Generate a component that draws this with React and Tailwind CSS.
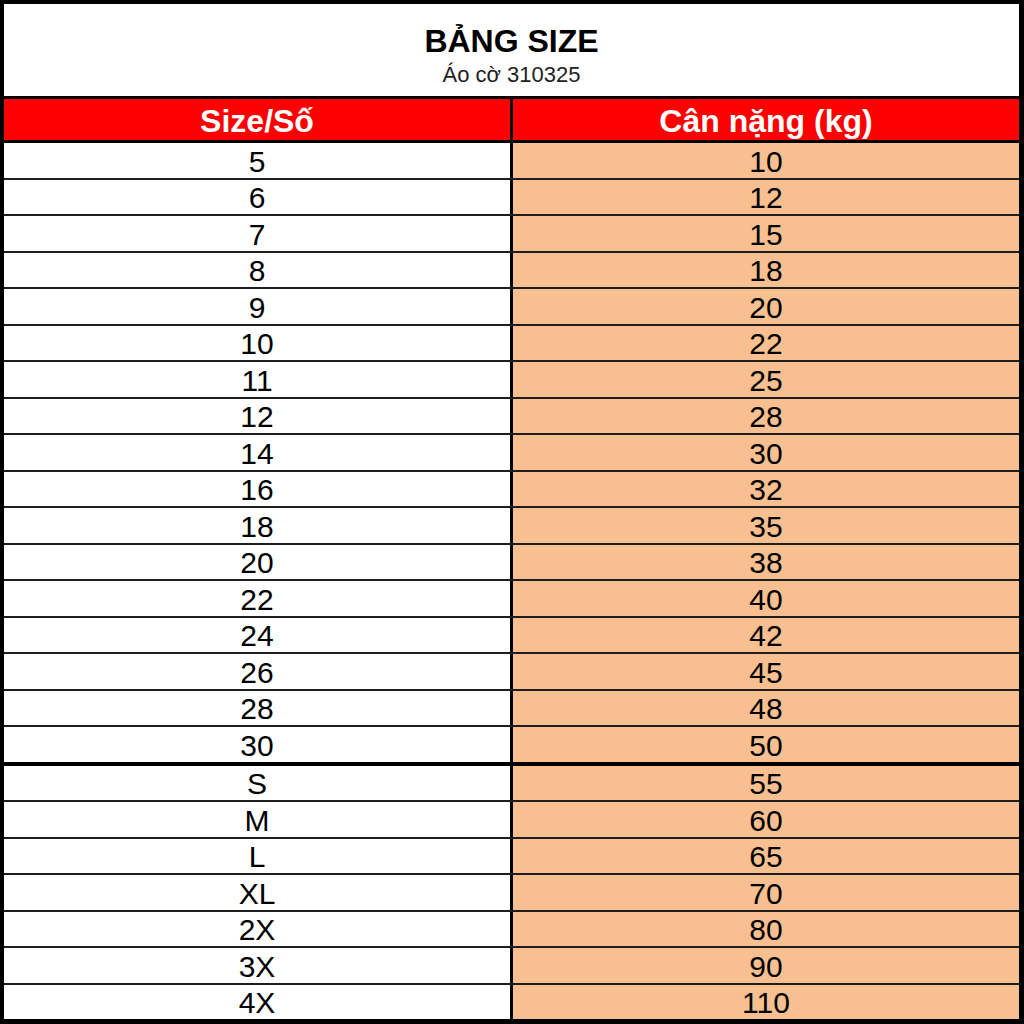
const ROWS = [
  ["5", "10"],
  ["6", "12"],
  ["7", "15"],
  ["8", "18"],
  ["9", "20"],
  ["10", "22"],
  ["11", "25"],
  ["12", "28"],
  ["14", "30"],
  ["16", "32"],
  ["18", "35"],
  ["20", "38"],
  ["22", "40"],
  ["24", "42"],
  ["26", "45"],
  ["28", "48"],
  ["30", "50"],
  ["S", "55"],
  ["M", "60"],
  ["L", "65"],
  ["XL", "70"],
  ["2X", "80"],
  ["3X", "90"],
  ["4X", "110"],
];

export default function App() {
  return (
    <div
      className="w-[1024px] h-[1024px] bg-white border-l-4 border-t-4 border-r-[5px] border-b-[5px] border-black flex flex-col text-black"
      style={{ fontFamily: '"Liberation Sans", Arial, sans-serif' }}
    >
      <div className="h-[95px] shrink-0 border-b-[3px] border-black flex flex-col items-center pt-[19px]">
        <h1 className="text-[32px] leading-[36px] font-bold">BẢNG SIZE</h1>
        <p className="text-[22px] leading-[26px] mt-[3px] text-[#222]">Áo cờ 310325</p>
      </div>

      <div className="h-[44px] shrink-0 flex bg-[#ff0000] border-b-[3px] border-black text-white font-bold text-[32px] leading-[41px]">
        <div className="w-[509px] border-r-[3px] border-black text-center pt-[2px]">Size/Số</div>
        <div className="flex-1 text-center pt-[2px]">Cân nặng (kg)</div>
      </div>

      <div className="flex-1 flex flex-col text-[30px] leading-none">
        {ROWS.map(([size, kg], i) => (
          <div
            key={size}
            className={
              "flex-1 flex " +
              (i === 16
                ? "border-b-4 border-black"
                : i === ROWS.length - 1
                ? ""
                : "border-b-2 border-[#1e1e1e]")
            }
          >
            <div className="w-[509px] border-r-[3px] border-black flex items-center justify-center pt-[3px]">
              {size}
            </div>
            <div className="flex-1 bg-[#f8bf90] flex items-center justify-center pt-[3px]">{kg}</div>
          </div>
        ))}
      </div>
    </div>
  );
}
